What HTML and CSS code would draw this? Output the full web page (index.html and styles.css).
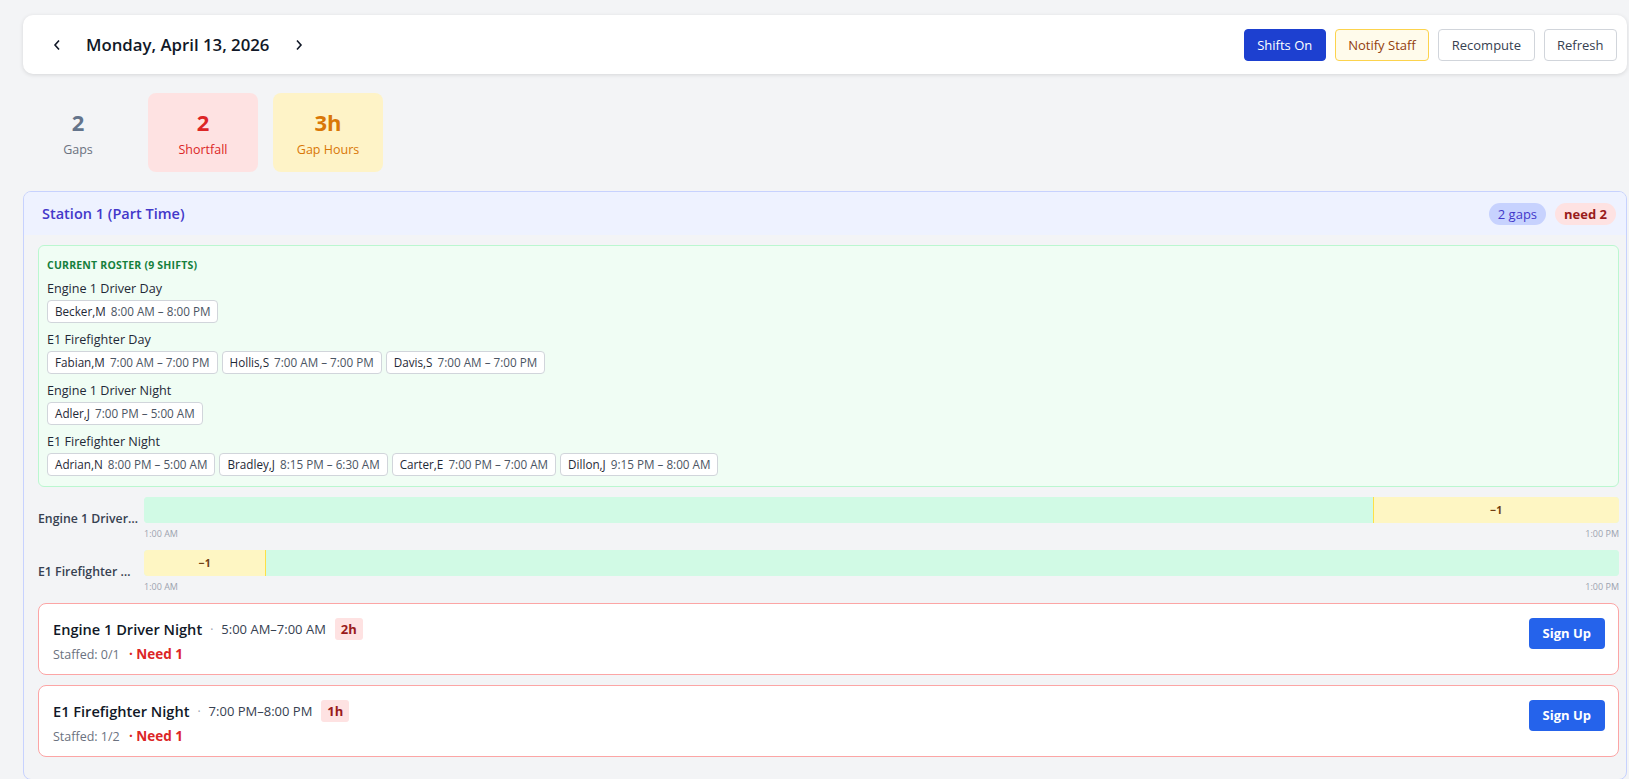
FILE: index.html
```html
<!DOCTYPE html>
<html>
<head>
<meta charset="utf-8">
<title>Coverage</title>
<link rel="stylesheet" href="styles.css">
</head>
<body>
<div class="page">
    <div class="topbar">
        <div class="datenav">
            <span class="chev"><svg width="8" height="12" viewBox="0 0 8 12"><polyline points="6,1.5 2,6 6,10.5" fill="none" stroke="#111827" stroke-width="1.6"/></svg></span>
            <span class="date">Monday, April 13, 2026</span>
            <span class="chev"><svg width="8" height="12" viewBox="0 0 8 12"><polyline points="2,1.5 6,6 2,10.5" fill="none" stroke="#111827" stroke-width="1.6"/></svg></span>
        </div>
        <div class="actions">
            <div class="btn btn-primary">Shifts On</div>
            <div class="btn btn-notify">Notify Staff</div>
            <div class="btn">Recompute</div>
            <div class="btn">Refresh</div>
        </div>
    </div>

    <div class="stats">
        <div class="stat stat-plain"><div class="num">2</div><div class="lbl">Gaps</div></div>
        <div class="stat stat-red"><div class="num">2</div><div class="lbl">Shortfall</div></div>
        <div class="stat stat-amber"><div class="num">3h</div><div class="lbl">Gap Hours</div></div>
    </div>

    <div class="station">
        <div class="station-head">
            <div class="station-title">Station 1 (Part Time)</div>
            <div class="badges">
                <span class="badge badge-gaps">2 gaps</span>
                <span class="badge badge-need">need 2</span>
            </div>
        </div>
        <div class="station-body">
            <div class="roster">
                <div class="roster-title">Current Roster (9 shifts)</div>
                <div class="group">
                    <div class="group-name">Engine 1 Driver Day</div>
                    <div class="chips">
                        <span class="chip">Becker,M <em>8:00 AM – 8:00 PM</em></span>
                    </div>
                </div>
                <div class="group">
                    <div class="group-name">E1 Firefighter Day</div>
                    <div class="chips">
                        <span class="chip">Fabian,M <em>7:00 AM – 7:00 PM</em></span>
                        <span class="chip">Hollis,S <em>7:00 AM – 7:00 PM</em></span>
                        <span class="chip">Davis,S <em>7:00 AM – 7:00 PM</em></span>
                    </div>
                </div>
                <div class="group">
                    <div class="group-name">Engine 1 Driver Night</div>
                    <div class="chips">
                        <span class="chip">Adler,J <em>7:00 PM – 5:00 AM</em></span>
                    </div>
                </div>
                <div class="group">
                    <div class="group-name">E1 Firefighter Night</div>
                    <div class="chips">
                        <span class="chip">Adrian,N <em>8:00 PM – 5:00 AM</em></span>
                        <span class="chip">Bradley,J <em>8:15 PM – 6:30 AM</em></span>
                        <span class="chip">Carter,E <em>7:00 PM – 7:00 AM</em></span>
                        <span class="chip">Dillon,J <em>9:15 PM – 8:00 AM</em></span>
                    </div>
                </div>
            </div>

            <div class="timeline">
                <div class="tl-label">Engine 1 Driver Night</div>
                <div class="tl-track">
                    <div class="bar">
                        <div class="seg seg-ok" style="width: 83.3%"></div>
                        <div class="seg seg-gap" style="width: 16.7%">−1</div>
                    </div>
                    <div class="ticks"><span>1:00 AM</span><span>1:00 PM</span></div>
                </div>
            </div>
            <div class="timeline">
                <div class="tl-label">E1 Firefighter Night</div>
                <div class="tl-track">
                    <div class="bar">
                        <div class="seg seg-gap first" style="width: 8.3%">−1</div>
                        <div class="seg seg-ok" style="width: 91.7%"></div>
                    </div>
                    <div class="ticks"><span>1:00 AM</span><span>1:00 PM</span></div>
                </div>
            </div>

            <div class="gap-card">
                <div class="gap-info">
                    <div class="gap-line">
                        <span class="gap-name">Engine 1 Driver Night</span>
                        <span class="dot">·</span>
                        <span class="gap-time">5:00 AM–7:00 AM</span>
                        <span class="hours">2h</span>
                    </div>
                    <div class="gap-sub">Staffed: 0/1 <b>· Need 1</b></div>
                </div>
                <div class="signup">Sign Up</div>
            </div>
            <div class="gap-card">
                <div class="gap-info">
                    <div class="gap-line">
                        <span class="gap-name">E1 Firefighter Night</span>
                        <span class="dot">·</span>
                        <span class="gap-time">7:00 PM–8:00 PM</span>
                        <span class="hours">1h</span>
                    </div>
                    <div class="gap-sub">Staffed: 1/2 <b>· Need 1</b></div>
                </div>
                <div class="signup">Sign Up</div>
            </div>
        </div>
    </div>
</div>
</body>
</html>
```

FILE: styles.css
```css
body {
    margin: 0;
    background-color: #f3f4f6;
    font-family: "Open Sans", "Noto Sans", sans-serif;
    color: #111827;
}

.page {
    width: 1604px;
    margin-left: 23px;
    padding-top: 15px;
}

.topbar {
    display: flex;
    align-items: center;
    justify-content: space-between;
    height: 59px;
    background: white;
    border-radius: 10px;
    box-shadow: 0 1px 4px rgba(0,0,0,0.12);
    padding: 0 10px 0 30px;
    box-sizing: border-box;
}

.datenav {
    display: flex;
    align-items: center;
}

.chev {
    display: flex;
}

.date {
    font-size: 16.8px;
    font-weight: 600;
    margin: 0 26px 0 25px;
}

.actions {
    display: flex;
    gap: 9px;
}

.btn {
    height: 32px;
    line-height: 30px;
    padding: 0 12.5px;
    border: 1px solid #d1d5db;
    border-radius: 4px;
    font-size: 13px;
    color: #374151;
    background: white;
    box-sizing: border-box;
}

.btn-primary {
    background: #1d40d0;
    border-color: #1d40d0;
    color: white;
}

.btn-notify {
    background: #fffbeb;
    border-color: #fcd34d;
    color: #92400e;
}

.stats {
    display: flex;
    gap: 15px;
    margin-top: 19px;
}

.stat {
    width: 110px;
    height: 79px;
    border-radius: 8px;
    text-align: center;
    box-sizing: border-box;
    padding-top: 15px;
}

.stat .num {
    font-size: 22px;
    font-weight: 700;
    line-height: 28px;
}

.stat .lbl {
    font-size: 12.5px;
    line-height: 18px;
    margin-top: 5px;
}

.stat-plain { color: #6b7280; }
.stat-plain .num { color: #64748b; }
.stat-red { background: #fee2e2; color: #dc2626; }
.stat-amber { background: #fef3c7; color: #d97706; }

.station {
    margin-top: 19px;
    border: 1px solid #c7d2fe;
    border-radius: 8px;
    overflow: hidden;
}

.station-head {
    display: flex;
    justify-content: space-between;
    align-items: center;
    height: 43px;
    background: #eef2ff;
    padding: 0 10px 0 18px;
}

.station-title {
    font-size: 14.5px;
    font-weight: 600;
    color: #4338ca;
}

.badges {
    display: flex;
    gap: 9px;
}

.badge {
    font-size: 13px;
    line-height: 22px;
    padding: 0 9px;
    border-radius: 11px;
}

.badge-gaps { background: #c7d2fe; color: #4338ca; }
.badge-need { background: #fee2e2; color: #991b1b; font-weight: 700; }

.station-body {
    padding: 10px 7px 22px 14px;
}

.roster {
    background: #f0fdf4;
    border: 1px solid #bbf7d0;
    border-radius: 6px;
    padding: 12px 8px 10px 8px;
}

.roster-title {
    font-size: 10.5px;
    line-height: 14px;
    font-weight: 700;
    text-transform: uppercase;
    color: #15803d;
    letter-spacing: 0.2px;
    margin-bottom: 8px;
}

.group {
    margin-bottom: 8px;
}

.group:last-child {
    margin-bottom: 0;
}

.group-name {
    font-size: 12.6px;
    color: #1f2937;
    line-height: 18px;
    margin-bottom: 2px;
}

.chips {
    display: flex;
    gap: 4px;
}

.chip {
    display: inline-block;
    height: 23px;
    line-height: 21px;
    padding: 0 7px;
    background: white;
    border: 1px solid #d1d5db;
    border-radius: 4px;
    font-size: 11.7px;
    color: #1f2937;
    box-sizing: border-box;
}

.chip em {
    font-style: normal;
    color: #4b5563;
    margin-left: 2px;
}

.timeline {
    display: flex;
    align-items: center;
    margin-top: 10px;
}

.timeline + .timeline {
    margin-top: 11px;
}

.tl-label {
    width: 100px;
    margin-right: 6px;
    flex-shrink: 0;
    font-size: 12.3px;
    font-weight: 600;
    color: #374151;
    white-space: nowrap;
    overflow: hidden;
    text-overflow: ellipsis;
}

.tl-track {
    flex: 1;
}

.bar {
    display: flex;
    height: 26px;
    background: #d1fae5;
    border-radius: 4px;
    overflow: hidden;
}

.seg {
    height: 100%;
}

.seg-ok {
    background: #d1fae5;
}

.seg-gap {
    background: #fef6c3;
    border-left: 1px solid #fde047;
    box-sizing: border-box;
    text-align: center;
    font-size: 10.5px;
    font-weight: 700;
    line-height: 26px;
    color: #713f12;
}

.seg-gap.first {
    border-left: none;
    border-right: 1px solid #fde047;
}

.ticks {
    display: flex;
    justify-content: space-between;
    font-size: 9px;
    color: #9ca3af;
    margin-top: 5px;
    line-height: 11px;
}

.gap-card {
    display: flex;
    justify-content: space-between;
    align-items: flex-start;
    background: white;
    border: 1px solid #fca5a5;
    border-radius: 8px;
    height: 72px;
    box-sizing: border-box;
    padding: 13px 13px 0 14px;
    margin-top: 11px;
}

.gap-card + .gap-card {
    margin-top: 10px;
}

.gap-line {
    display: flex;
    align-items: center;
    height: 24px;
}

.gap-name {
    font-size: 14.6px;
    font-weight: 600;
    color: #111827;
}

.dot {
    color: #9ca3af;
    font-size: 12px;
    margin: 0 8px;
}

.gap-time {
    font-size: 13px;
    color: #374151;
}

.hours {
    margin-left: 9px;
    background: #fee2e2;
    color: #991b1b;
    font-size: 13px;
    font-weight: 700;
    padding: 0 6px;
    line-height: 22px;
    border-radius: 3px;
}

.gap-sub {
    margin-top: 4px;
    font-size: 12.5px;
    line-height: 18px;
    color: #6b7280;
}

.gap-sub b {
    color: #dc2626;
    margin-left: 6px;
    font-size: 13.5px;
}

.signup {
    margin-top: 1px;
    background: #2563eb;
    color: white;
    font-size: 13px;
    font-weight: 700;
    padding: 0 14px;
    line-height: 31px;
    border-radius: 4px;
}
```
